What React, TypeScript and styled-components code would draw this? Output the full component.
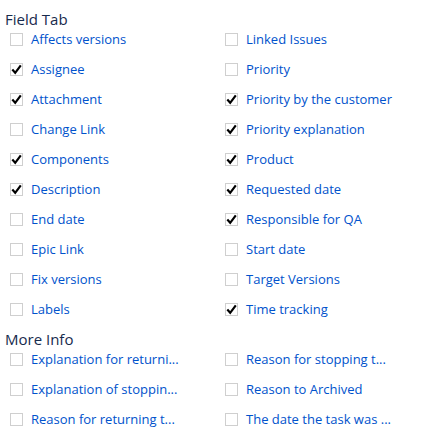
import React from "react";
import styled, { createGlobalStyle } from "styled-components";

const Global = createGlobalStyle`
  body { margin: 0; background: #fff; font-family: "Open Sans", "Noto Sans", sans-serif; }
`;

const Page = styled.div`
  padding: 9px 0 0 5px;
`;

const Heading = styled.div`
  font-size: 15px;
  line-height: 20px;
  height: 20px;
  color: #172b4d;
`;

const Grid = styled.div`
  display: grid;
  grid-template-columns: 215px 200px;
  row-gap: 10px;
  padding-left: 5px;
  margin-bottom: 10px;
`;

const Row = styled.label`
  display: flex;
  align-items: center;
  height: 20px;
  gap: 8px;
`;

const Box = styled.span`
  width: 11px;
  height: 11px;
  border: 1px solid #cfcfcf;
  display: flex;
  align-items: center;
  justify-content: center;
  flex: none;
`;

const Label = styled.span`
  font-size: 13px;
  color: #0052cc;
  white-space: nowrap;
`;

type Item = [string, boolean];

const fieldLeft: Item[] = [
  ["Affects versions", false],
  ["Assignee", true],
  ["Attachment", true],
  ["Change Link", false],
  ["Components", true],
  ["Description", true],
  ["End date", false],
  ["Epic Link", false],
  ["Fix versions", false],
  ["Labels", false],
];
const fieldRight: Item[] = [
  ["Linked Issues", false],
  ["Priority", false],
  ["Priority by the customer", true],
  ["Priority explanation", true],
  ["Product", true],
  ["Requested date", true],
  ["Responsible for QA", true],
  ["Start date", false],
  ["Target Versions", false],
  ["Time tracking", true],
];
const moreLeft: Item[] = [
  ["Explanation for returni...", false],
  ["Explanation of stoppin...", false],
  ["Reason for returning t...", false],
];
const moreRight: Item[] = [
  ["Reason for stopping t...", false],
  ["Reason to Archived", false],
  ["The date the task was ...", false],
];

const Check = () => (
  <svg width="11" height="11" viewBox="0 0 11 11">
    <path d="M1.3 5.6 L4.2 8.8 L9.8 1.4" fill="none" stroke="#000" strokeWidth="2.2" />
  </svg>
);

const Field = ({ item }: { item: Item }) => (
  <Row>
    <Box>{item[1] && <Check />}</Box>
    <Label>{item[0]}</Label>
  </Row>
);

const Section = ({ left, right }: { left: Item[]; right: Item[] }) => {
  const cells: React.ReactNode[] = [];
  for (let i = 0; i < Math.max(left.length, right.length); i++) {
    cells.push(<Field key={"l" + i} item={left[i]} />);
    cells.push(<Field key={"r" + i} item={right[i]} />);
  }
  return <Grid>{cells}</Grid>;
};

export default function App() {
  return (
    <>
      <Global />
      <Page>
        <Heading>Field Tab</Heading>
        <Section left={fieldLeft} right={fieldRight} />
        <Heading>More Info</Heading>
        <Section left={moreLeft} right={moreRight} />
      </Page>
    </>
  );
}
